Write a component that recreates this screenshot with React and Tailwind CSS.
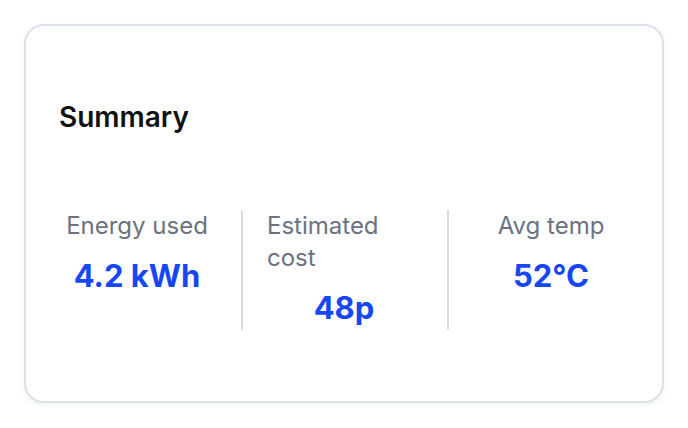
const stats = [
  { label: 'Energy used', value: '4.2 kWh', cls: 'w-[182px] pr-[26px]' },
  { label: 'Estimated cost', value: '48p', cls: 'w-[206px] pl-[24px] pr-[26px] border-l-2 border-[#d7dce6]' },
  { label: 'Avg temp', value: '52°C', cls: 'flex-1 pl-[24px] border-l-2 border-[#d7dce6]' },
];

const App = () => {
  return (
    <div className="min-h-screen bg-white p-6" style={{ fontFamily: 'Inter, "Noto Sans", sans-serif' }}>
      <div className="w-[640px] rounded-[20px] border-2 border-[#dde1ea] bg-white px-[33px] pt-[73px] pb-[71px] shadow-[0_2px_6px_rgba(15,23,42,0.06)]">
        <h2 className="text-[28px] leading-9 font-semibold text-[#111111] mb-[75px]">Summary</h2>

        <div className="flex">
          {stats.map((stat) => (
            <div key={stat.label} className={`flex flex-col items-center pb-0.5 ${stat.cls}`}>
              <div className="text-2xl text-[#6b7280]">{stat.label}</div>
              <div className="mt-[14px] text-[31px] leading-10 font-bold text-[#1747f5]">{stat.value}</div>
            </div>
          ))}
        </div>
      </div>
    </div>
  );
};

export default App;
